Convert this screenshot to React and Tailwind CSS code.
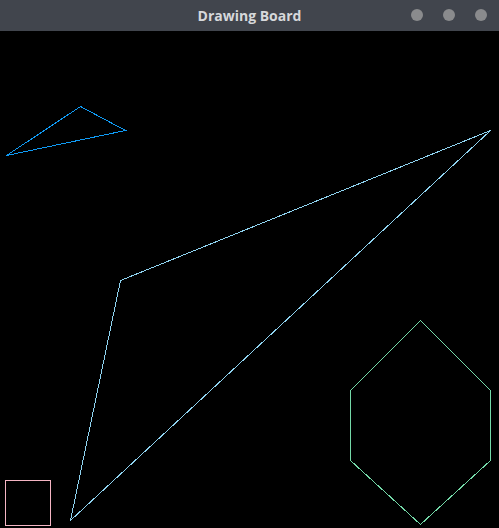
function TitleBar() {
  return (
    <div className="relative flex h-[31px] items-center justify-center bg-[#41454d]">
      <span className="-mt-[1px] text-[14px] font-bold text-[#d6d8db] [font-family:'Open_Sans',sans-serif]">
        Drawing Board
      </span>
      <div className="absolute right-[12px] top-[9px] flex gap-[20px]">
        <span className="h-[12px] w-[12px] rounded-full bg-[#8a8b8d]" />
        <span className="h-[12px] w-[12px] rounded-full bg-[#8a8b8d]" />
        <span className="h-[12px] w-[12px] rounded-full bg-[#8a8b8d]" />
      </div>
    </div>
  );
}

function Canvas() {
  return (
    <div className="h-[497px] w-full bg-black">
      <svg width="499" height="497" viewBox="0 31 499 497" shapeRendering="crispEdges" fill="none" strokeWidth="1">
        <polygon points="6.5,155.5 80.5,106.5 125.5,130.5" stroke="#0f9bf5" />
        <polygon points="490.5,130.5 120.5,280.5 70.5,520.5" stroke="#8fd3f0" />
        <polygon points="420.5,320.5 490.5,390.5 490.5,460.5 420.5,524.5 350.5,460.5 350.5,390.5" stroke="#74d8a8" />
        <rect x="5.5" y="480.5" width="45" height="45" stroke="#f5b5c4" />
      </svg>
    </div>
  );
}

export default function App() {
  return (
    <div className="h-[528px] w-[499px] overflow-hidden bg-black">
      <TitleBar />
      <Canvas />
    </div>
  );
}
